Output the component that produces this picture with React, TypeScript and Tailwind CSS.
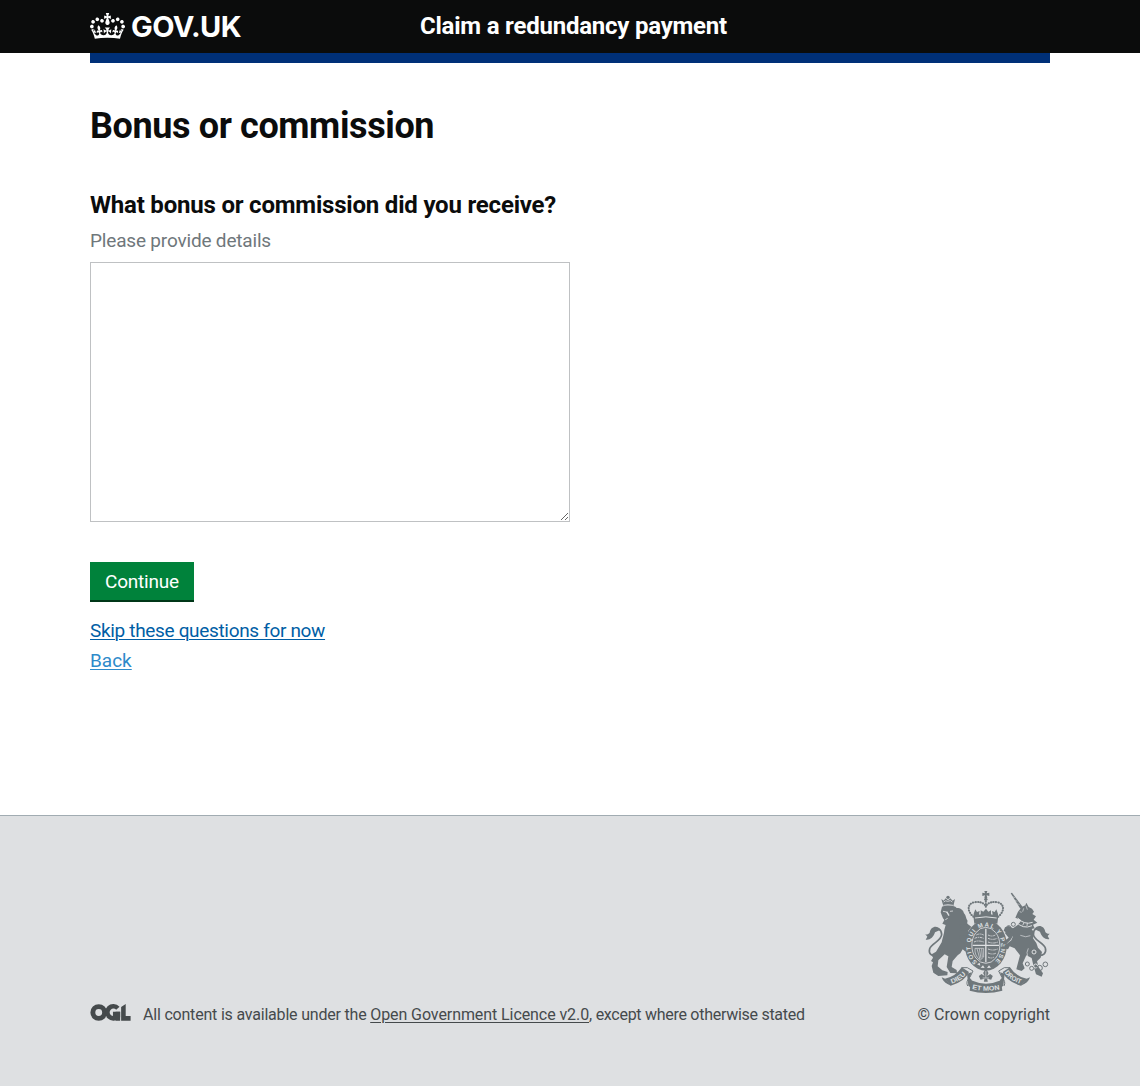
const CROWN_PATH =
  "M25 30.2c3.5 1.5 7.7-.2 9.1-3.7 1.5-3.6-.2-7.8-3.9-9.2-3.6-1.4-7.6.3-9.1 3.9-1.4 3.5.3 7.5 3.9 9zM9 39.5c3.6 1.5 7.8-.2 9.2-3.7 1.5-3.6-.2-7.8-3.9-9.1-3.6-1.5-7.6.2-9.1 3.8-1.4 3.5.3 7.5 3.8 9zM4.4 57.2c3.5 1.5 7.7-.2 9.1-3.8 1.5-3.6-.2-7.7-3.9-9.1-3.5-1.5-7.6.3-9.1 3.8-1.4 3.5.3 7.6 3.9 9.1zm38.3-21.4c3.5 1.5 7.7-.2 9.1-3.8 1.5-3.6-.2-7.7-3.9-9.1-3.6-1.5-7.6.3-9.1 3.8-1.3 3.6.4 7.7 3.9 9.1zm64.4-5.6c-3.6 1.5-7.8-.2-9.1-3.7-1.5-3.6.2-7.8 3.8-9.2 3.6-1.4 7.7.3 9.2 3.9 1.3 3.5-.4 7.5-3.9 9zm15.9 9.3c-3.6 1.5-7.7-.2-9.1-3.7-1.5-3.6.2-7.8 3.7-9.1 3.6-1.5 7.7.2 9.2 3.8 1.5 3.5-.3 7.5-3.8 9zm4.7 17.7c-3.6 1.5-7.8-.2-9.2-3.8-1.5-3.6.2-7.7 3.9-9.1 3.6-1.5 7.7.3 9.2 3.8 1.3 3.5-.4 7.6-3.9 9.1zM89.3 35.8c-3.6 1.5-7.8-.2-9.2-3.8-1.4-3.6.2-7.7 3.9-9.1 3.6-1.5 7.7.3 9.2 3.8 1.4 3.6-.3 7.7-3.9 9.1zM69.7 17.7l8.9 4.7V9.3l-8.900 2.800c-.2-.3-.5-.6-.9-.9L72.400 0H59.600l3.500 11.200c-.3.3-.6.5-.9.9l-8.800-2.800v13.100l8.800-4.700c.3.3.6.7.9.9l-5 15.400v.1c-.2.8-.4 1.600-.4 2.400 0 4.100 3.100 7.500 7 8.100h.2c.3 0 .7.1 1 .1.4 0 .7 0 1-.1h.2c4-.6 7.100-4.100 7.100-8.100 0-.8-.1-1.700-.4-2.400V34l-5.100-15.400c.4-.2.7-.6 1-.9zM66 92.800c16.900 0 32.800 1.100 47.100 3.200 4-16.900 8.900-26.700 14-33.500l-9.600-3.400c1 4.900 1.100 7.200 0 10.200-1.500-1.400-3-4.300-4.200-8.700L108.600 76c2.800-2 5-3.200 7.500-3.300-4.400 9.400-10 11.900-13.600 11.200-4.300-.8-6.300-4.600-5.600-7.900 1-4.700 5.700-5.900 8-.5 4.300-8.700-3-11.400-7.600-8.800 7.100-7.200 7.900-13.500 2.100-21.100-8 6.100-8.100 12.300-4.500 20.800-4.700-5.400-12.100-2.500-9.500 6.200 3.400-5.200 7.900-2 7.200 3.100-.6 4.300-6.400 7.800-13.500 7.200-10.300-.9-10.900-8-11.200-13.800 2.500-.5 7.100 1.800 11 7.300L80.200 60c-4.100 4.400-8 5.300-12.300 5.400 1.400-4.400 8-11.600 8-11.600H55.500s6.400 7.200 7.900 11.600c-4.200-.1-8-1-12.300-5.400l1.400 16.400c3.900-5.500 8.500-7.700 10.900-7.300-.3 5.800-.9 12.800-11.100 13.800-7.200.6-12.900-2.900-13.500-7.200-.7-5 3.800-8.300 7.100-3.100 2.700-8.700-4.600-11.600-9.400-6.200 3.700-8.500 3.600-14.700-4.600-20.800-5.800 7.600-5 13.900 2.200 21.100-4.700-2.600-11.900.1-7.700 8.800 2.300-5.500 7.100-4.200 8.100.5.7 3.300-1.300 7.100-5.700 7.900-3.500.7-9-1.800-13.500-11.200 2.500.1 4.700 1.300 7.500 3.300l-4.700-15.400c-1.200 4.400-2.700 7.200-4.300 8.700-1.100-3-.9-5.300 0-10.200l-9.500 3.400c5 6.900 9.900 16.700 14 33.500 14.800-2.100 30.800-3.200 47.700-3.200z";

function CrownIcon() {
  return (
    <svg viewBox="0 0 132 97" className="h-[26px] w-[35px] shrink-0" fill="#fff" preserveAspectRatio="none" aria-hidden="true">
      <path d={CROWN_PATH} />
    </svg>
  );
}

function OglLogo() {
  return (
    <svg viewBox="0 0 123 52" className="h-[17px] w-[41px] shrink-0" aria-hidden="true">
      <circle cx="25.500" cy="26" r="18" fill="none" stroke="#454a4c" strokeWidth="15" />
      <path d="M84 13A18.500 18.500 0 1 0 84 38V31H69" fill="none" stroke="#454a4c" strokeWidth="14" />
      <path d="M77 24h14v27H77zM94 9L108 0v37h15v14H94z" fill="#454a4c" />
    </svg>
  );
}

function Tail({ flip }: { flip?: boolean }) {
  return (
    <g transform={flip ? "translate(435 -2) scale(-1 1)" : undefined}>
      <path
        d="M70 213C48 216 40 205 44 191C50 174 80 168 80 148C79 132 66 126 56 136"
        fill="none"
        strokeWidth="5"
      />
      <path d="M77 134C66 118 46 125 44 143C41 147 36 149 31 148L37 155L32 164C43 167 56 157 60 142Z" stroke="none" />
    </g>
  );
}

function SideRibbon({ flip }: { flip?: boolean }) {
  return (
    <g transform={flip ? "translate(425 0) scale(-1 1)" : undefined}>
      <path d="M80 277L92 282L108 302L96 296Q84 290 80 277Z" />
      <path d="M90 281Q122 275 140 247L162 261Q150 290 107 302Z" />
      <path d="M140 248H157L174 258L165 276Q151 290 158 303" fill="none" strokeWidth="3" />
      <path d="M156 266L170 262L164 278L170 285L168 308L160 302Z" />
    </g>
  );
}

function RoyalArms() {
  const bg = "#dee0e2";
  return (
    <svg
      viewBox="30 18 375 306"
      className="h-[102px] w-[125px]"
      fill="#6f777b"
      stroke="#6f777b"
      strokeWidth="0"
      aria-hidden="true"
    >
      {/* Lion */}
      <Tail />
      <path d="M81 65C90 60 111 60 121 65L125 69C137 69 145 75 147 85C154 92 152 100 158 108C154 113 162 124 157 133C166 144 157 158 157 168L153 184L168 191L166 200L150 199L143 193L136 205L128 211L113 228L110 246L125 255L126 265L106 264L95 246L100 214L89 208L70 226L68 244L82 256L98 261L97 271L70 273L55 263L50 243L54 232L48 228L54 218L50 208L63 200L80 172C82 160 88 146 88 134L92 120L82 116L88 105L84 100L80 90L77 82Z" />
      <path d="M134 119L158 117L169 125L160 137L138 138ZM132 150L152 151L168 170L160 182L147 176L136 164Z" />
      <path d="M79 42l7 5 6-7 7 6 7-6 7 7 7-5-5 21q-15-4-30 0z" />
      <circle cx="99" cy="37" r="5" />
      <g fill="none" stroke={bg} strokeWidth="2.500">
        <path d="M86 51q5-6 12-2q9-5 14 2M85 61q14-4 29 0" />
        <path d="M84 79l11 2 4 6M105 79l9-1M91 104l7-4" />
        <path d="M95 80l7 12" strokeWidth="4" />
      </g>

      {/* Central crown */}
      <path d="M208 18h9l-2 7 8-2v10l-8-2 2 8h-9l2-8-8 2V23l8 2z" />
      <circle cx="212.500" cy="43" r="5" />
      <path d="M175 92q37-10 75 0l-3 24q-34-10-69 0z" />
      <path d="M213 71l7 9 8-4v18h-31V76l8 4zM181 73l5 8 8-3-3 16-15 2v-10zM244 73l-5 8-8-3 3 16 15 2v-10z" />
      <g fill="none" strokeLinecap="round" strokeDasharray="0 7.500" strokeWidth="6.500">
        <path d="M175 95C154 77 158 56 177 52Q199 48 210 60" />
        <path d="M250 95C271 77 267 56 248 52Q226 48 215 60" />
        <path d="M212.500 50V72" />
      </g>
      <g fill="none" strokeWidth="2">
        <path d="M175 95C154 77 158 56 177 52Q199 48 210 60" />
        <path d="M250 95C271 77 267 56 248 52Q226 48 215 60" />
      </g>
      <path d="M180 99q33-7 65 0" fill="none" stroke={bg} strokeWidth="3" />

      {/* Garter and shield */}
      <ellipse cx="212.500" cy="181" rx="63" ry="76" />
      <ellipse cx="212.500" cy="181" rx="42" ry="54" fill="none" stroke={bg} strokeWidth="2.500" />
      <path id="garter" d="M187 231A46 58 0 1 1 238 231" fill="none" />
      <text fill={bg} fontFamily="Liberation Sans" fontWeight="700" fontSize="18" textLength="268" lengthAdjust="spacing">
        <textPath href="#garter">SOIT QUI MAL Y PENSE</textPath>
      </text>
      <path d="M212.500 131v101M173 181h79" fill="none" stroke={bg} strokeWidth="4" />
      <g fill="none" stroke={bg} strokeWidth="2.500" strokeDasharray="8 2 4 2">
        <path d="M184 150q10-6 22 0M179 160q12-6 27 0M177 171q12-6 29 0M219 150q12 6 22 0M219 160q14 6 28 0M219 171q15 6 30 0" />
        <path d="M219 192q15 6 29 0M219 204q14 6 25 0M219 216q10 6 18 0" />
      </g>
      <path d="M180 190h26v26l-10 9q-18-12-16-35zM186 191l9 32M193 191l5 29M200 191l2 26" fill="none" stroke={bg} strokeWidth="2" />
      <path d="M186 238l8-5 2 9zM197 248l7-7 5 8zM216 249l6-8 6 7z" fill={bg} />

      {/* Unicorn */}
      <Tail flip />
      <path d="M287 25L291 23L323 66L316 71Z" />
      <path d="M292 35l8 3M299 46l8 3M307 56l7 3" stroke={bg} strokeWidth="1.500" />
      <path d="M301 98L309 80L320 66L331 61L334 53L341 66L351 71L357 80L352 87L363 94L356 104L367 113L354 119L359 130L350 132L358 144L354 160L364 174L369 188L381 201L377 218L366 229L371 247L384 265L380 275L363 268L355 241L350 219L334 211L323 235L329 250L320 258L304 253L307 241L315 211L299 190L284 184L279 193L267 190L270 181L289 166L294 154L276 145L266 137L270 127L281 123L294 130L308 120L318 105Z" />
      <path d="M287 164L275 176L262 179L267 169L281 158L269 143L281 137L297 148Z" />
      <g fill="none" stroke={bg} strokeWidth="3">
        <path d="M301 108q22 27 50 14M308 99q20 22 45 13" />
        <path d="M314 80l6 2M326 70l-3 10M333 62l4 12" strokeWidth="2" />
        <path d="M311 114l6-5M323 121l4-8M336 123l1-9" strokeWidth="2.500" />
        <path d="M316 151q17 8 30 1M340 190q-7 12-2 25" strokeWidth="2" />
      </g>
      <g fill="none" strokeWidth="3">
        <circle cx="281" cy="128" r="6" />
        <circle cx="295" cy="118" r="6" />
        <circle cx="337" cy="237" r="6" />
        <circle cx="350" cy="250" r="6" />
        <circle cx="362" cy="243" r="6" stroke={bg} />
        <circle cx="374" cy="249" r="8" />
        <circle cx="391" cy="238" r="7" />
        <circle cx="357" cy="201" r="6" stroke={bg} />
      </g>

      {/* Motto ribbon */}
      <SideRibbon />
      <SideRibbon flip />
      <path d="M168 286Q213 306 258 286L262 317Q212 331 164 317Z" />
      <path d="M178 266Q190 258 212 257Q235 258 247 266L242 281Q212 294 183 281Z" fill={bg} />
      <path d="M212.500 249l8 15-4 9 9-6 8 6-5 11-12-3 2 9h-12l2-9-12 3-5-11 8-6 9 6-4-9z" />
      <path d="M212.500 258v20M203 279h19" stroke={bg} strokeWidth="2" />
      <path id="mottoLeft" d="M110 296Q142 286 156 262" fill="none" />
      <path id="mottoMid" d="M171 312Q213 322 257 312" fill="none" />
      <path id="mottoRight" d="M269 262Q283 286 320 298" fill="none" />
      <g fill={bg} fontFamily="Liberation Sans" fontWeight="700" fontSize="20">
        <text textLength="52" lengthAdjust="spacingAndGlyphs">
          <textPath href="#mottoLeft">DIEU</textPath>
        </text>
        <text textLength="84" lengthAdjust="spacingAndGlyphs">
          <textPath href="#mottoMid">ET MON</textPath>
        </text>
        <text textLength="60" lengthAdjust="spacingAndGlyphs">
          <textPath href="#mottoRight">DROIT</textPath>
        </text>
      </g>
    </svg>
  );
}

export default function App() {
  return (
    <div className="flex min-h-[1086px] flex-col bg-white font-['Roboto',sans-serif] text-[#0b0c0c]">
      <header className="h-[53px] bg-[#0b0c0c] text-white">
        <div className="mx-auto flex w-[960px]">
          <a href="#" className="flex w-[330px] items-start pt-[13px]">
            <CrownIcon />
            <span className="ml-[6px] font-['Inter',sans-serif] text-[29px] leading-[28px] font-bold tracking-[-0.6px]">
              GOV.UK
            </span>
          </a>
          <span className="pt-[11px] text-2xl leading-[30px] font-bold tracking-[-0.22px]">Claim a redundancy payment</span>
        </div>
      </header>
      <div className="mx-auto h-[10px] w-[960px] bg-[#003078]" />

      <main className="mx-auto w-[960px] flex-1">
        <h1 className="mt-[43px] text-4xl leading-[40px] font-bold tracking-[-0.39px]">Bonus or commission</h1>
        <form className="mt-11 flex flex-col items-start" onSubmit={(e) => e.preventDefault()}>
          <label htmlFor="details" className="flex flex-col">
            <span className="text-2xl leading-[30px] font-bold tracking-[-0.2px]">
              What bonus or commission did you receive?
            </span>
            <span className="mt-2 text-[19px] leading-[25px] tracking-[-0.18px] text-[#6f777b]">Please provide details</span>
          </label>
          <textarea id="details" className="mt-[9px] h-[260px] w-[480px] resize border border-[#bfc1c3] bg-white p-1 text-[19px] outline-none" />
          <button className="mt-10 h-10 w-[104px] border-b-2 border-[#003618] bg-[#00823b] pt-0.5 text-[19px] leading-[36px] tracking-[-0.2px] text-white">
            Continue
          </button>
          <a href="#" className="mt-4 text-[19px] leading-[25px] tracking-[-0.33px] text-[#005ea5] underline decoration-1 underline-offset-2">
            Skip these questions for now
          </a>
          <a href="#" className="mt-[5px] text-[19px] leading-[25px] text-[#2e8aca] underline decoration-1 underline-offset-2">
            Back
          </a>
        </form>
      </main>

      <footer className="h-[271px] border-t border-[#a1acb2] bg-[#dee0e2] text-base text-[#454a4c]">
        <div className="mx-auto flex w-[960px] items-end justify-between pt-[75px]">
          <div className="flex items-start">
            <div className="pt-px">
              <OglLogo />
            </div>
            <p className="ml-3 leading-6 whitespace-pre">
              <span className="tracking-[-0.2px]">All content is available under the </span>
              <a href="#" className="tracking-[-0.08px] underline decoration-1 underline-offset-2">
                Open Government Licence v2.0
              </a>
              <span className="tracking-[-0.28px]">, except where otherwise stated</span>
            </p>
          </div>
          <a href="#" className="flex flex-col items-end">
            <RoyalArms />
            <span className="mt-[10px] leading-6">© Crown copyright</span>
          </a>
        </div>
      </footer>
    </div>
  );
}
